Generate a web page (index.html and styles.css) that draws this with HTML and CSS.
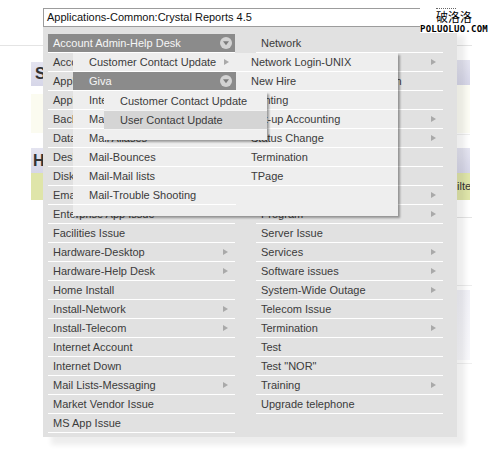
FILE: index.html
```html
<!DOCTYPE html>
<html>
<head>
<meta charset="utf-8">
<title>Crystal Reports category menu</title>
<link rel="stylesheet" href="styles.css">
</head>
<body>
<div class="page">
  <aside class="side side-left">
    <div class="rule"></div>
    <div class="blk lav s-box"><b>S</b></div>
    <div class="blk yel y1"></div>
    <div class="blk lav h-box"><b>H</b></div>
    <div class="blk grn"></div>
  </aside>

  <main class="center">
    <div class="field">Applications-Common:Crystal Reports 4.5</div>
    <div class="menu">
      <ul class="col">
        <li class="item on">Account Admin-Help Desk
          <svg class="drop" width="12" height="12" viewBox="0 0 12 12"><circle cx="6" cy="6" r="6" fill="#d3d3d3"/><path d="M3 4.3h6L6 8.3z" fill="#7c7c7c"/></svg>
          <div class="sub">
            <ul class="scol">
              <li class="item more">Customer Contact Update</li>
              <li class="item on">Giva
                <svg class="drop" width="12" height="12" viewBox="0 0 12 12"><circle cx="6" cy="6" r="6" fill="#d3d3d3"/><path d="M3 4.3h6L6 8.3z" fill="#7c7c7c"/></svg>
                <ul class="sub2">
                  <li class="item">Customer Contact Update</li>
                  <li class="item sel">User Contact Update</li>
                </ul>
              </li>
              <li class="item">Internet Access</li>
              <li class="item">Mail Accounts</li>
              <li class="item">Mail Aliases</li>
              <li class="item">Mail-Bounces</li>
              <li class="item">Mail-Mail lists</li>
              <li class="item">Mail-Trouble Shooting</li>
            </ul>
            <ul class="scol scol-r">
              <li class="item">Network Login-UNIX</li>
              <li class="item">New Hire</li>
              <li class="item">Printing</li>
              <li class="item">Set-up Accounting</li>
              <li class="item">Status Change</li>
              <li class="item">Termination</li>
              <li class="item">TPage</li>
            </ul>
          </div>
        </li>
        <li class="item">Account Maintenance</li>
        <li class="item">Application Access</li>
        <li class="item">Application Issue</li>
        <li class="item">Backup/Restore</li>
        <li class="item">Database Issue</li>
        <li class="item">Desktop Support</li>
        <li class="item">Disk Space</li>
        <li class="item">Email Issue</li>
        <li class="item">Enterprise App Issue</li>
        <li class="item">Facilities Issue</li>
        <li class="item more">Hardware-Desktop</li>
        <li class="item more">Hardware-Help Desk</li>
        <li class="item">Home Install</li>
        <li class="item more">Install-Network</li>
        <li class="item more">Install-Telecom</li>
        <li class="item">Internet Account</li>
        <li class="item">Internet Down</li>
        <li class="item more">Mail Lists-Messaging</li>
        <li class="item">Market Vendor Issue</li>
        <li class="item">MS App Issue</li>
      </ul>
      <ul class="col">
        <li class="item">Network</li>
        <li class="item more">Network Issues</li>
        <li class="item">New User Account Activation</li>
        <li class="item">Password Reset</li>
        <li class="item more">PC Setup</li>
        <li class="item more">Phone Issue</li>
        <li class="item">Printer Issue</li>
        <li class="item">Printing</li>
        <li class="item more">Procurement</li>
        <li class="item more">Program</li>
        <li class="item">Server Issue</li>
        <li class="item more">Services</li>
        <li class="item more">Software issues</li>
        <li class="item more">System-Wide Outage</li>
        <li class="item">Telecom Issue</li>
        <li class="item more">Termination</li>
        <li class="item">Test</li>
        <li class="item">Test "NOR"</li>
        <li class="item more">Training</li>
        <li class="item">Upgrade telephone</li>
      </ul>
    </div>
  </main>

  <aside class="side side-right">
    <div class="rule"></div>
    <div class="blk lav r-lav1"></div>
    <div class="blk yel r-yel"></div>
    <div class="rule r-rule2"></div>
    <div class="blk lav r-lav2"></div>
    <div class="blk grn"><span>ilte</span></div>
    <div class="rule r-rule3"></div>
    <div class="rule r-rule4"></div>
    <div class="blk pale"></div>
    <div class="rule r-rule5"></div>
  </aside>

  <div class="mark">
    <div class="mark-cn">破洛洛</div>
    <div class="mark-en">POLUOLUO.COM</div>
  </div>
</div>
</body>
</html>
```

FILE: styles.css
```css
* { box-sizing: border-box; margin: 0; padding: 0; }
body {
  margin: 0;
  background: #fff;
  font-family: "Liberation Sans", Arial, sans-serif;
  font-size: 11px;
  color: #3b3b3b;
}
ul { list-style: none; }

.page {
  position: relative;
  display: flex;
  align-items: flex-start;
  width: 500px;
  height: 456px;
  overflow: hidden;
}

/* page content peeking out behind the dropdown */
.side { display: flex; flex-direction: column; flex: none; }
.side-left { width: 43px; }
.side-right { width: 43px; }
.rule { height: 1px; background: #e4e4e4; margin-top: 45px; }
.side-left .blk { margin-left: 31px; width: 12px; }
.side-right .blk { width: 13px; }
.side-right .rule { width: 15px; }
.lav { background: linear-gradient(#e4e4f0, #d6d6e8); }
.yel { background: #fbfbf0; }
.grn { background: #dfe5a9; }
.pale { background: linear-gradient(#f1f1f7, #f8f8fb); }
.blk b {
  display: block;
  font-family: "Liberation Sans", Arial, sans-serif;
  font-size: 16px;
  font-weight: bold;
  color: #333;
}
.s-box { margin-top: 16px; height: 24px; }
.s-box b { padding: 3px 0 0 4px; line-height: 18px; }
.y1 { margin-top: 8px; height: 39px; }
.h-box { margin-top: 15px; height: 25px; }
.h-box b { padding: 5px 0 0 2px; line-height: 16px; }
.side-left .grn { height: 27px; }

.r-lav1 { margin-top: 14px; height: 25px; }
.r-yel { height: 48px; background: #fcfcf4; }
.side-right .r-rule2 { margin-top: 1px; width: 13px; background: #eeeeee; }
.r-lav2 { margin-top: 13px; height: 25px; }
.side-right .grn { height: 27px; overflow: hidden; }
.side-right .grn span {
  display: block;
  line-height: 27px;
  font-size: 11px;
  color: #333;
  white-space: nowrap;
}
.side-right .r-rule3 { margin-top: 17px; }
.side-right .r-rule4 { margin-top: 67px; background: #ececec; }
.pale { margin-top: 4px; height: 70px; }
.side-right .r-rule5 { margin-top: 3px; background: #efefef; }

/* combo box + dropdown */
.center { width: 414px; flex: none; margin-top: 8px; }
.field {
  height: 19px;
  border: 1px solid #9c9c9c;
  background: #fff;
  padding-left: 3px;
  line-height: 17px;
  color: #111;
  white-space: nowrap;
}
.menu {
  position: relative;
  height: 410px;
  background: #e1e1e1;
  padding: 7px 14px 4px 5px;
  display: grid;
  grid-template-columns: 187px 187px;
  column-gap: 21px;
  align-items: start;
  box-shadow: 8px 8px 5px rgba(0, 0, 0, 0.07);
}

.item {
  height: 19px;
  border-bottom: 1px solid #fff;
  padding: 0 7px 0 5px;
  display: flex;
  align-items: center;
  justify-content: space-between;
  line-height: 18px;
  white-space: nowrap;
}
.more::after {
  content: "";
  flex: none;
  border-left: 5px solid #a9a9a9;
  border-top: 3.5px solid transparent;
  border-bottom: 3.5px solid transparent;
}
.on {
  position: relative;
  background: #8b8b8b;
  color: #f6f6f6;
  padding-right: 3px;
}
.drop { flex: none; display: block; }

.sub {
  position: absolute;
  left: 25px;
  top: 19px;
  width: 325px;
  height: 163px;
  z-index: 2;
  background: #eeeeee;
  color: #3b3b3b;
  box-shadow: 2px 2px 2px rgba(0, 0, 0, 0.35);
  display: grid;
  grid-template-columns: 163px 162px;
  align-items: start;
}
.sub .item { padding-left: 16px; }
.sub .scol-r .item { padding-left: 15px; }
.sub .on { padding-right: 4px; }

.sub2 {
  position: absolute;
  left: 31px;
  top: 20px;
  width: 163px;
  padding-bottom: 10px;
  z-index: 3;
  background: #efefef;
  color: #3b3b3b;
  box-shadow: 2px 2px 2px rgba(0, 0, 0, 0.35);
}
.sub2 .item { border-bottom-color: #f4f4f4; }
.sel { background: #d5d5d5; }

/* watermark */
.mark {
  position: absolute;
  left: 420px;
  top: 8px;
  width: 71px;
  height: 25px;
  background: #fff;
  z-index: 5;
}
.mark-cn {
  margin-left: 16px;
  font-family: "Noto Sans CJK SC", sans-serif;
  font-size: 12px;
  line-height: 16px;
  color: #000;
  border-top: 1px dotted #666;
  width: 20px;
  white-space: nowrap;
}
.mark-en {
  font-family: "DejaVu Sans Mono", monospace;
  font-weight: bold;
  font-size: 9px;
  line-height: 9px;
  letter-spacing: 0.25px;
  color: #000;
  white-space: nowrap;
}
```
